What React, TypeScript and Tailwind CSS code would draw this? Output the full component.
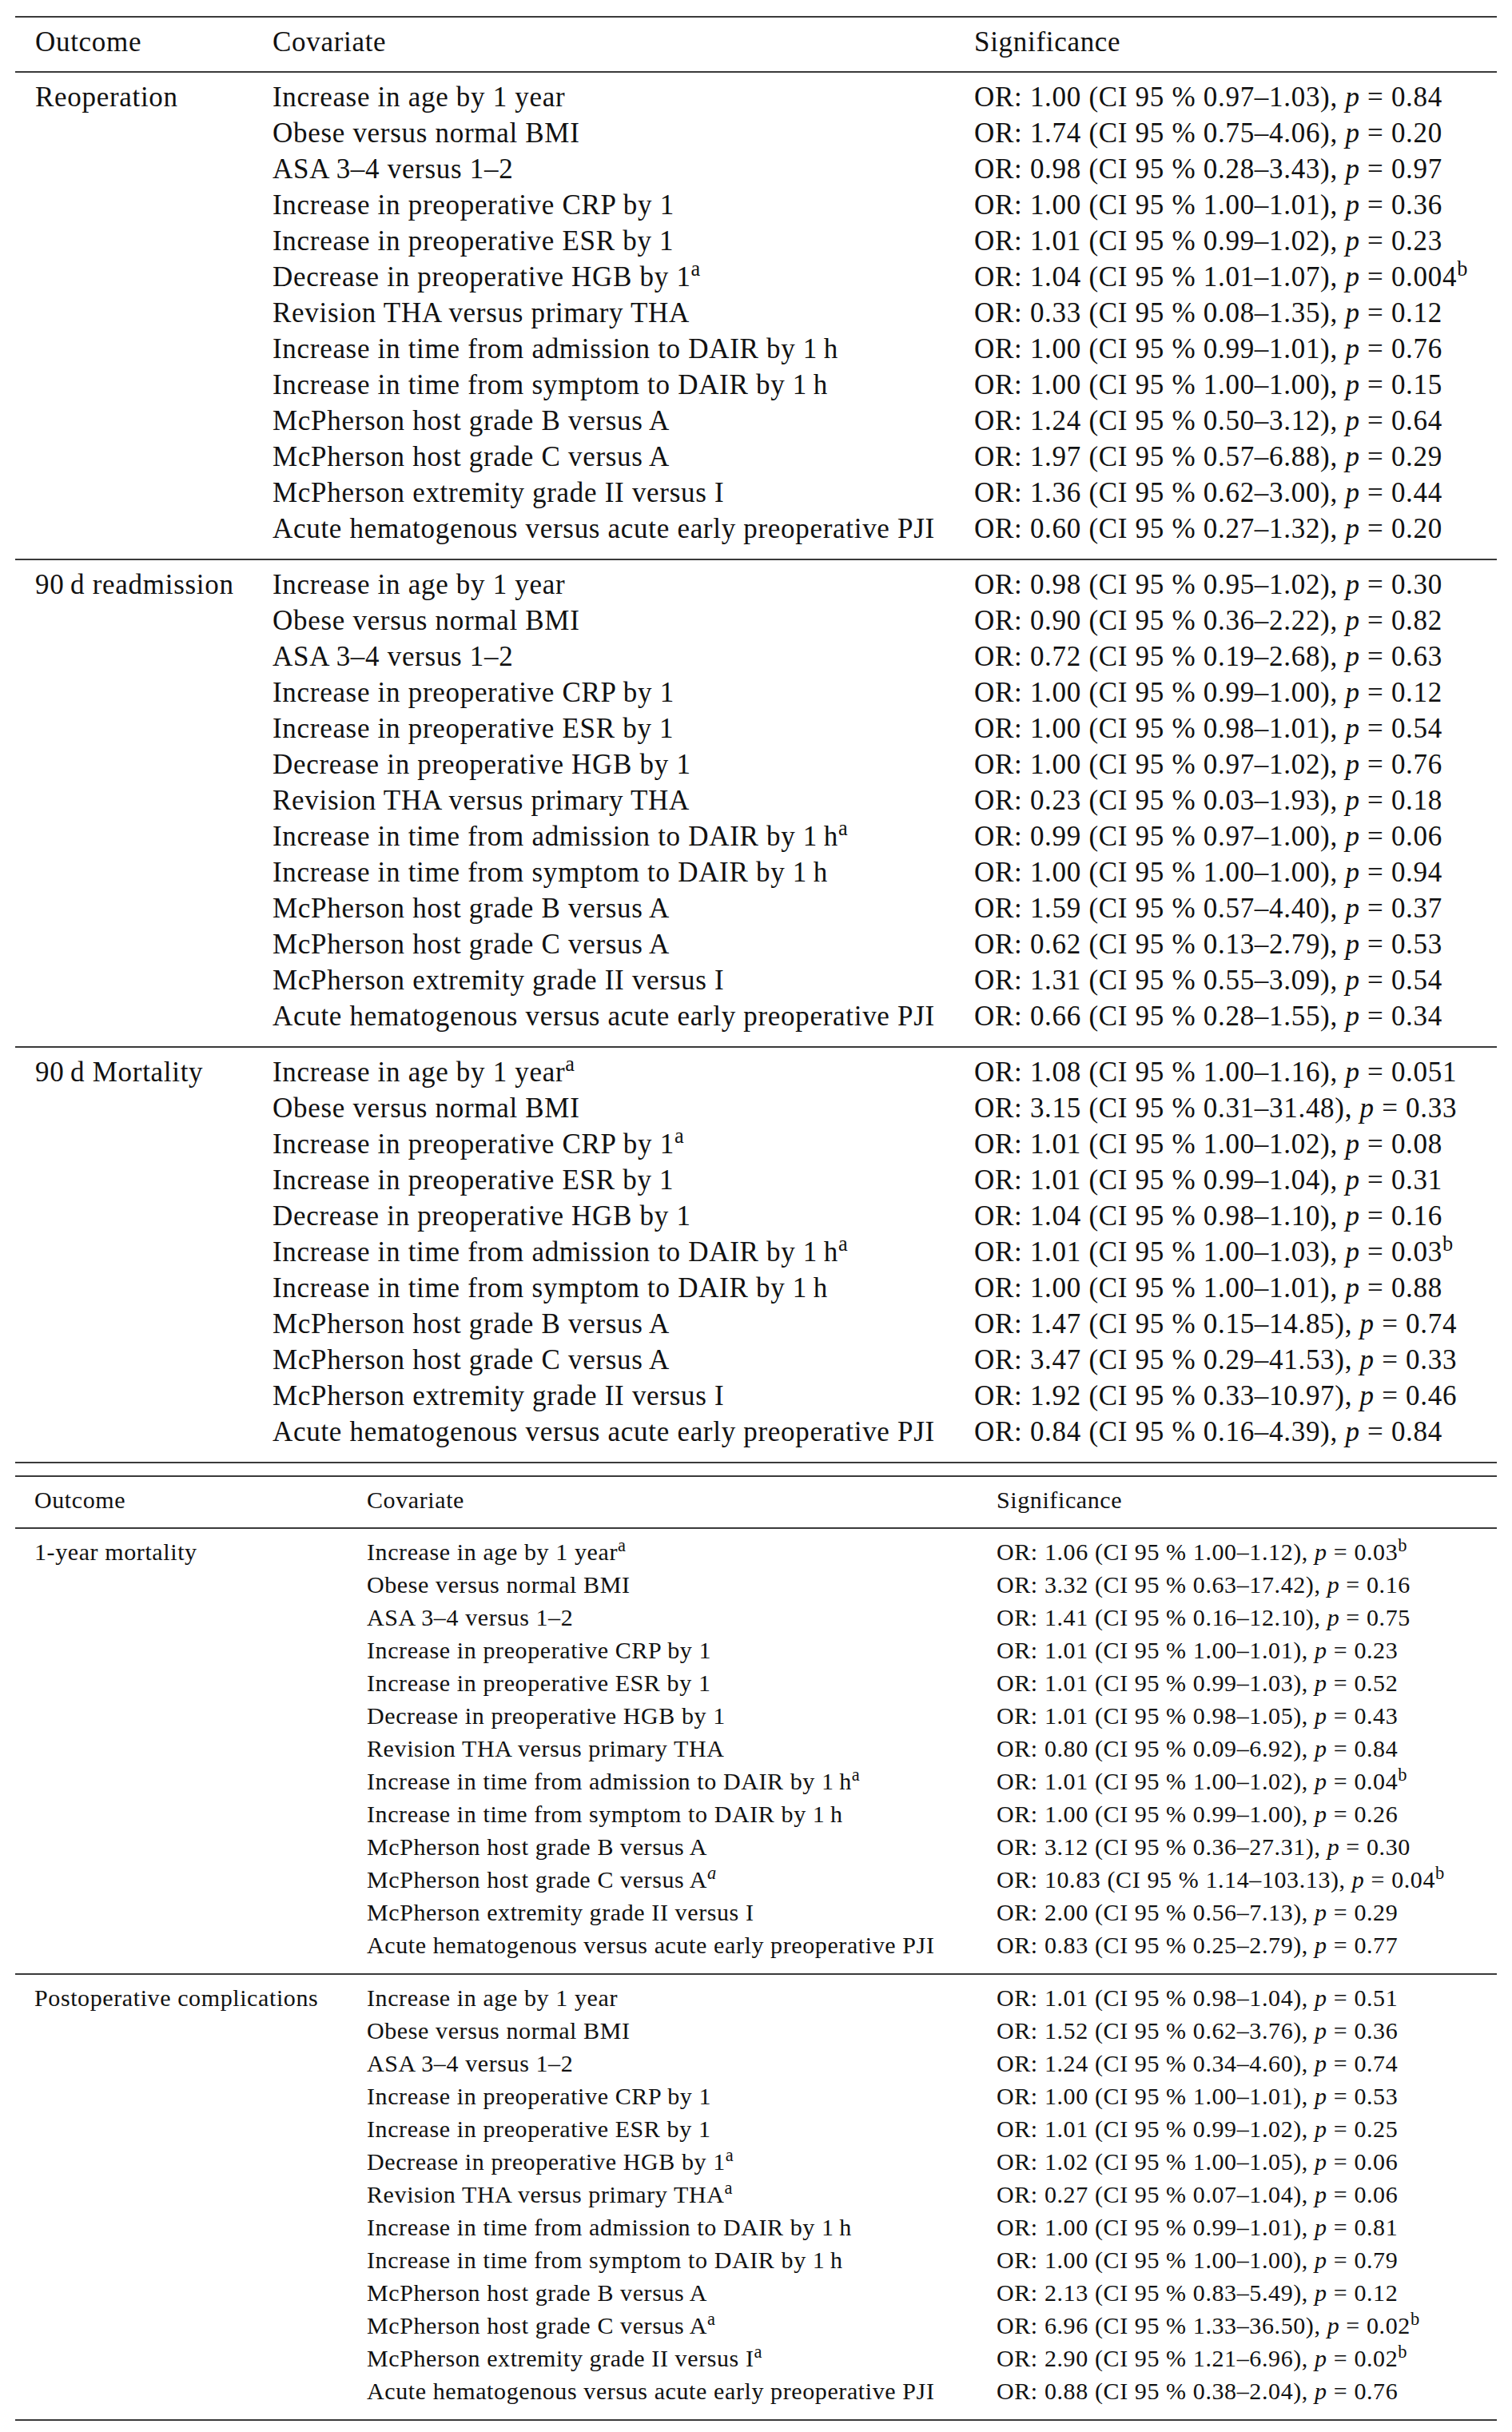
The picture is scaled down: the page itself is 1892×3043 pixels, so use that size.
import React from "react";

type Row = { c: string; ca?: "a" | "ai"; or: string; lo: string; hi: string; p: string; pb?: boolean };
type Section = { outcome: string; rows: Row[] };

const r = (c: string, or: string, lo: string, hi: string, p: string, ca?: "a" | "ai", pb?: boolean): Row => ({ c, ca, or, lo, hi, p, pb });

const table1: Section[] = [
  {
    outcome: "Reoperation",
    rows: [
      r("Increase in age by 1 year", "1.00", "0.97", "1.03", "0.84"),
      r("Obese versus normal BMI", "1.74", "0.75", "4.06", "0.20"),
      r("ASA 3–4 versus 1–2", "0.98", "0.28", "3.43", "0.97"),
      r("Increase in preoperative CRP by 1", "1.00", "1.00", "1.01", "0.36"),
      r("Increase in preoperative ESR by 1", "1.01", "0.99", "1.02", "0.23"),
      r("Decrease in preoperative HGB by 1", "1.04", "1.01", "1.07", "0.004", "a", true),
      r("Revision THA versus primary THA", "0.33", "0.08", "1.35", "0.12"),
      r("Increase in time from admission to DAIR by 1\u2009h", "1.00", "0.99", "1.01", "0.76"),
      r("Increase in time from symptom to DAIR by 1\u2009h", "1.00", "1.00", "1.00", "0.15"),
      r("McPherson host grade B versus A", "1.24", "0.50", "3.12", "0.64"),
      r("McPherson host grade C versus A", "1.97", "0.57", "6.88", "0.29"),
      r("McPherson extremity grade II versus I", "1.36", "0.62", "3.00", "0.44"),
      r("Acute hematogenous versus acute early preoperative PJI", "0.60", "0.27", "1.32", "0.20"),
    ],
  },
  {
    outcome: "90\u2009d readmission",
    rows: [
      r("Increase in age by 1 year", "0.98", "0.95", "1.02", "0.30"),
      r("Obese versus normal BMI", "0.90", "0.36", "2.22", "0.82"),
      r("ASA 3–4 versus 1–2", "0.72", "0.19", "2.68", "0.63"),
      r("Increase in preoperative CRP by 1", "1.00", "0.99", "1.00", "0.12"),
      r("Increase in preoperative ESR by 1", "1.00", "0.98", "1.01", "0.54"),
      r("Decrease in preoperative HGB by 1", "1.00", "0.97", "1.02", "0.76"),
      r("Revision THA versus primary THA", "0.23", "0.03", "1.93", "0.18"),
      r("Increase in time from admission to DAIR by 1\u2009h", "0.99", "0.97", "1.00", "0.06", "a"),
      r("Increase in time from symptom to DAIR by 1\u2009h", "1.00", "1.00", "1.00", "0.94"),
      r("McPherson host grade B versus A", "1.59", "0.57", "4.40", "0.37"),
      r("McPherson host grade C versus A", "0.62", "0.13", "2.79", "0.53"),
      r("McPherson extremity grade II versus I", "1.31", "0.55", "3.09", "0.54"),
      r("Acute hematogenous versus acute early preoperative PJI", "0.66", "0.28", "1.55", "0.34"),
    ],
  },
  {
    outcome: "90\u2009d Mortality",
    rows: [
      r("Increase in age by 1 year", "1.08", "1.00", "1.16", "0.051", "a"),
      r("Obese versus normal BMI", "3.15", "0.31", "31.48", "0.33"),
      r("Increase in preoperative CRP by 1", "1.01", "1.00", "1.02", "0.08", "a"),
      r("Increase in preoperative ESR by 1", "1.01", "0.99", "1.04", "0.31"),
      r("Decrease in preoperative HGB by 1", "1.04", "0.98", "1.10", "0.16"),
      r("Increase in time from admission to DAIR by 1\u2009h", "1.01", "1.00", "1.03", "0.03", "a", true),
      r("Increase in time from symptom to DAIR by 1\u2009h", "1.00", "1.00", "1.01", "0.88"),
      r("McPherson host grade B versus A", "1.47", "0.15", "14.85", "0.74"),
      r("McPherson host grade C versus A", "3.47", "0.29", "41.53", "0.33"),
      r("McPherson extremity grade II versus I", "1.92", "0.33", "10.97", "0.46"),
      r("Acute hematogenous versus acute early preoperative PJI", "0.84", "0.16", "4.39", "0.84"),
    ],
  },
];

const table2: Section[] = [
  {
    outcome: "1-year mortality",
    rows: [
      r("Increase in age by 1 year", "1.06", "1.00", "1.12", "0.03", "a", true),
      r("Obese versus normal BMI", "3.32", "0.63", "17.42", "0.16"),
      r("ASA 3–4 versus 1–2", "1.41", "0.16", "12.10", "0.75"),
      r("Increase in preoperative CRP by 1", "1.01", "1.00", "1.01", "0.23"),
      r("Increase in preoperative ESR by 1", "1.01", "0.99", "1.03", "0.52"),
      r("Decrease in preoperative HGB by 1", "1.01", "0.98", "1.05", "0.43"),
      r("Revision THA versus primary THA", "0.80", "0.09", "6.92", "0.84"),
      r("Increase in time from admission to DAIR by 1\u2009h", "1.01", "1.00", "1.02", "0.04", "a", true),
      r("Increase in time from symptom to DAIR by 1\u2009h", "1.00", "0.99", "1.00", "0.26"),
      r("McPherson host grade B versus A", "3.12", "0.36", "27.31", "0.30"),
      r("McPherson host grade C versus A", "10.83", "1.14", "103.13", "0.04", "ai", true),
      r("McPherson extremity grade II versus I", "2.00", "0.56", "7.13", "0.29"),
      r("Acute hematogenous versus acute early preoperative PJI", "0.83", "0.25", "2.79", "0.77"),
    ],
  },
  {
    outcome: "Postoperative complications",
    rows: [
      r("Increase in age by 1 year", "1.01", "0.98", "1.04", "0.51"),
      r("Obese versus normal BMI", "1.52", "0.62", "3.76", "0.36"),
      r("ASA 3–4 versus 1–2", "1.24", "0.34", "4.60", "0.74"),
      r("Increase in preoperative CRP by 1", "1.00", "1.00", "1.01", "0.53"),
      r("Increase in preoperative ESR by 1", "1.01", "0.99", "1.02", "0.25"),
      r("Decrease in preoperative HGB by 1", "1.02", "1.00", "1.05", "0.06", "a"),
      r("Revision THA versus primary THA", "0.27", "0.07", "1.04", "0.06", "a"),
      r("Increase in time from admission to DAIR by 1\u2009h", "1.00", "0.99", "1.01", "0.81"),
      r("Increase in time from symptom to DAIR by 1\u2009h", "1.00", "1.00", "1.00", "0.79"),
      r("McPherson host grade B versus A", "2.13", "0.83", "5.49", "0.12"),
      r("McPherson host grade C versus A", "6.96", "1.33", "36.50", "0.02", "a", true),
      r("McPherson extremity grade II versus I", "2.90", "1.21", "6.96", "0.02", "a", true),
      r("Acute hematogenous versus acute early preoperative PJI", "0.88", "0.38", "2.04", "0.76"),
    ],
  },
];

const Rule = () => <div className="h-[2px] bg-[#3a3a3a]" />;

const Sig = ({ row }: { row: Row }) => (
  <span>
    OR: {row.or} (CI 95 % {row.lo}–{row.hi}), <i>p</i> = {row.p}
    {row.pb && <sup>b</sup>}
  </span>
);

const Cov = ({ row }: { row: Row }) => (
  <span>
    {row.c}
    {row.ca === "a" && <sup>a</sup>}
    {row.ca === "ai" && <sup className="italic">a</sup>}
  </span>
);

interface TableProps {
  sections: Section[];
  cols: string;
  text: string;
  pad: string;
}

const Table: React.FC<TableProps> = ({ sections, cols, text, pad }) => (
  <div className={`w-[1854px] ml-[19px] ${text}`}>
    <Rule />
    <div className={`grid ${cols} ${pad} pt-[8px] pb-[14px]`}>
      <div>Outcome</div>
      <div>Covariate</div>
      <div>Significance</div>
    </div>
    {sections.map((s) => (
      <div key={s.outcome}>
        <Rule />
        <div className={`grid ${cols} ${pad} pt-[8px] pb-[15px]`}>
          {s.rows.map((row, i) => (
            <React.Fragment key={i}>
              <div>{i === 0 ? s.outcome : ""}</div>
              <div className="whitespace-nowrap"><Cov row={row} /></div>
              <div className="whitespace-nowrap"><Sig row={row} /></div>
            </React.Fragment>
          ))}
        </div>
      </div>
    ))}
    <Rule />
  </div>
);

export default function App() {
  return (
    <div className="w-[1892px] h-[3043px] bg-white text-[#111] font-['Liberation_Serif','Times_New_Roman',serif] pt-[20px] overflow-hidden">
      <Table
        sections={table1}
        cols="grid-cols-[297px_878px_1fr]"
        text="text-[35px] leading-[45px] tracking-[0.7px]"
        pad="pl-[25px]"
      />
      <div className="h-[15px]" />
      <Table
        sections={table2}
        cols="grid-cols-[416px_788px_1fr]"
        text="text-[30px] leading-[41px] tracking-[0.6px]"
        pad="pl-[24px]"
      />
    </div>
  );
}
